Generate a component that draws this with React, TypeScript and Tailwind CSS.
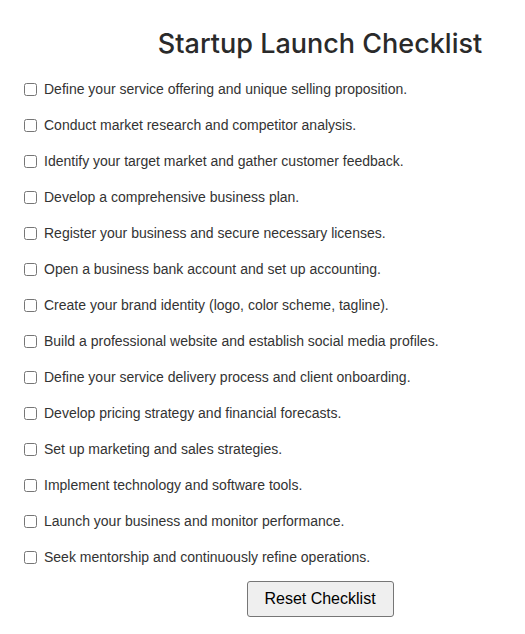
const items = [
  "Define your service offering and unique selling proposition.",
  "Conduct market research and competitor analysis.",
  "Identify your target market and gather customer feedback.",
  "Develop a comprehensive business plan.",
  "Register your business and secure necessary licenses.",
  "Open a business bank account and set up accounting.",
  "Create your brand identity (logo, color scheme, tagline).",
  "Build a professional website and establish social media profiles.",
  "Define your service delivery process and client onboarding.",
  "Develop pricing strategy and financial forecasts.",
  "Set up marketing and sales strategies.",
  "Implement technology and software tools.",
  "Launch your business and monitor performance.",
  "Seek mentorship and continuously refine operations.",
];

export default function App() {
  return (
    <div className="w-[600px] ml-[20px] font-['Liberation_Sans',Arial,sans-serif] text-[#333]">
      <h1 className="pt-[24px] mb-[8px] text-center text-[27px] leading-[39px] font-medium font-['Inter',sans-serif] text-[#2a2a2a]">
        Startup Launch Checklist
      </h1>
      <ul>
        {items.map((t) => (
          <li key={t} className="h-[36px] flex items-center text-[14px]">
            <label className="flex items-center">
              <input type="checkbox" className="m-[3px_3px_3px_4px] w-[13px] h-[13px]" />
              <span className="ml-[4px]">{t}</span>
            </label>
          </li>
        ))}
      </ul>
      <div className="flex justify-center mt-[6px]">
        <button className="w-[147px] h-[36px] bg-[#efefef] border border-[#767676] rounded-[3px] text-[16px] text-black">
          Reset Checklist
        </button>
      </div>
    </div>
  );
}
